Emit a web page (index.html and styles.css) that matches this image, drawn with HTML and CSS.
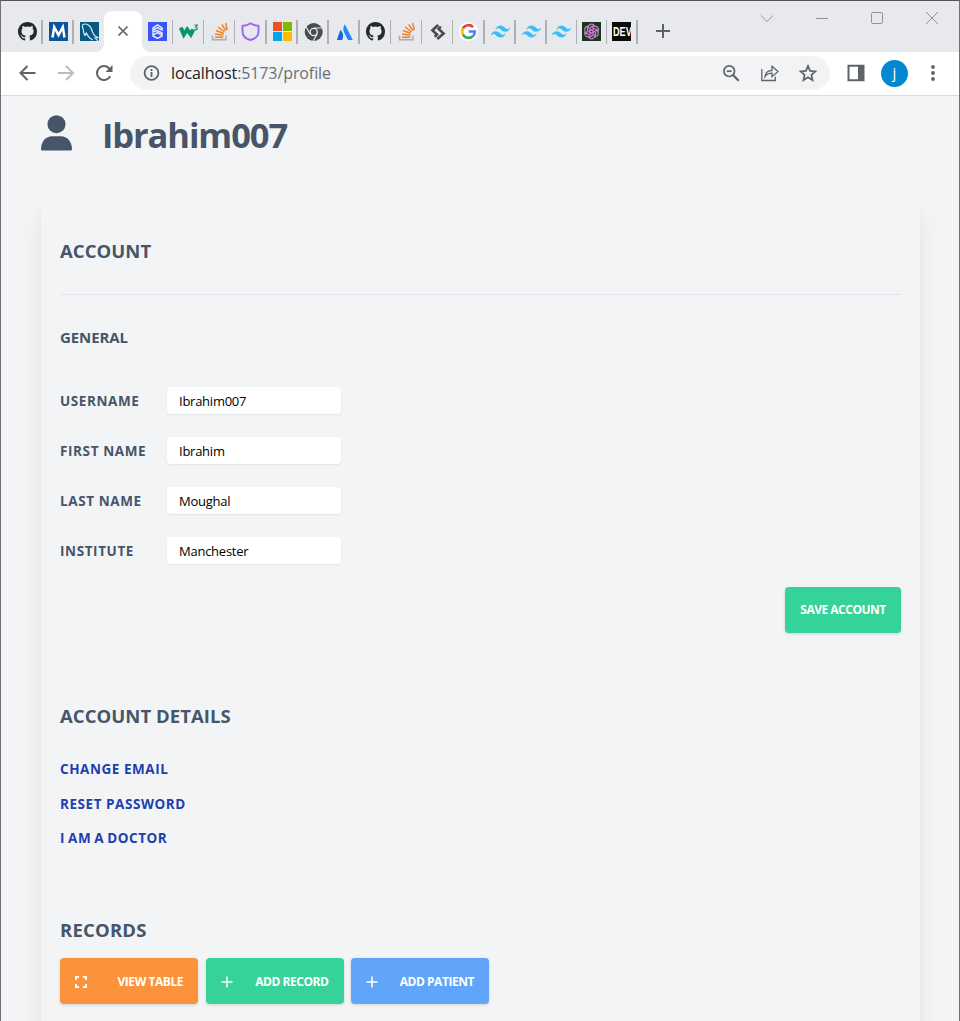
FILE: index.html
```html
<!DOCTYPE html>
<html lang="en">
<head>
<meta charset="utf-8">
<title>Profile</title>
<link rel="stylesheet" href="styles.css">
</head>
<body>
<svg width="0" height="0" class="defs" aria-hidden="true">
  <symbol id="github" viewBox="0 0 16 16"><path fill="#24292f" d="M8 0C3.58 0 0 3.58 0 8c0 3.54 2.29 6.53 5.47 7.59.4.07.55-.17.55-.38 0-.19-.01-.82-.01-1.49-2.01.37-2.53-.49-2.69-.94-.09-.23-.48-.94-.82-1.13-.28-.15-.68-.52-.01-.53.63-.01 1.08.58 1.23.82.72 1.21 1.87.87 2.33.66.07-.52.28-.87.51-1.07-1.78-.2-3.64-.89-3.64-3.95 0-.87.31-1.59.82-2.15-.08-.2-.36-1.02.08-2.12 0 0 .67-.21 2.2.82a7.6 7.6 0 0 1 4 0c1.53-1.04 2.2-.82 2.2-.82.44 1.1.16 1.92.08 2.12.51.56.82 1.27.82 2.15 0 3.07-1.87 3.75-3.65 3.95.29.25.54.73.54 1.48 0 1.07-.01 1.93-.01 2.2 0 .21.15.46.55.38A8.01 8.01 0 0 0 16 8c0-4.42-3.58-8-8-8z"/></symbol>
  <symbol id="stack" viewBox="0 0 19 19"><path fill="none" stroke="#a9acb0" stroke-width="1.5" d="M2.5 13.500v4.300h13.500v-4.300"/><path stroke="#f48024" stroke-width="1.500" fill="none" d="M5 15.300h8.300M5.100 12l8.300 1.200M6 8.500l7.800 3M8.200 5l6.400 5M11.700 2.500l4.200 6M15.700 1l1.500 7.200"/></symbol>
  <symbol id="tailwind" viewBox="0 0 24 24"><path fill="#38bdf8" stroke="#38bdf8" stroke-width=".5" d="M12 4.8c-3.2 0-5.2 1.6-6 4.8 1.2-1.6 2.6-2.2 4.2-1.8.9.23 1.57.89 2.3 1.63C13.7 10.63 15.1 12 18 12c3.2 0 5.2-1.6 6-4.8-1.2 1.6-2.6 2.2-4.2 1.8-.9-.23-1.57-.89-2.3-1.63C16.3 6.17 14.9 4.8 12 4.8zM6 12c-3.2 0-5.2 1.6-6 4.8 1.2-1.6 2.6-2.2 4.2-1.8.9.23 1.57.89 2.3 1.63C7.7 17.83 9.1 19.2 12 19.2c3.2 0 5.2-1.6 6-4.8-1.2 1.6-2.6 2.2-4.2 1.8-.9-.23-1.57-.89-2.3-1.63C10.3 13.37 8.9 12 6 12z"/></symbol>
</svg>
<div class="window">
  <header class="tabstrip">
    <div class="tab"><svg><use href="#github"/></svg></div>
    <div class="tab"><svg viewBox="0 0 19 19"><path fill="#0b559f" d="M0 0h19v19H0z"/><path fill="none" stroke="#fff" stroke-width="2.5" d="M3.5 15.5 5.2 5l4.3 8 4.3-8 1.7 10.500"/></svg></div>
    <div class="tab tab-last"><svg viewBox="0 0 19 19"><path fill="#065a82" d="M0 0h19v19H0z"/><path fill="none" stroke="#d5e5ec" stroke-width="1.2" d="M3 2.500c3-1.500 8 .5 9.500 7.500l2 3.500 3.500 2-3 .5 3 3M3 2.500c-1.500 1.500-.5 3 .2 4.500.3 2.500.3 5 1.800 6.500l1.200-2.500c1.500 3 3.500 5.500 6.500 7"/></svg></div>
    <div class="tab-active"><svg viewBox="0 0 12 12"><path d="M1.500 1.500l9 9m0-9l-9 9"/></svg></div>
    <div class="tab wide"><svg viewBox="0 0 19 19"><path fill="#3b55f6" d="M0 0h19v19H0z"/><path fill="none" stroke="#e4e9ff" stroke-width="1.500" d="M5 8V6l4.500-3L14 6v2L9.500 5.700 5 8v2l4.500-1.500L14 11v2.200l-4.500-2.500L5 13.200M5 11v3l4.500 2.500L14 14v-2"/></svg></div>
    <div class="tab wide"><svg viewBox="0 0 19 19"><path fill="none" stroke="#059862" stroke-width="4" d="M1.800 5.500 4.800 12.500l3.400-5 3.600 5 2.500-5"/><path fill="none" stroke="#059862" stroke-width="1.200" d="M15.500 3h2.900l-1.700 2c2 0 2 2.800 0 2.800l-1.300-.5"/></svg></div>
    <div class="tab wide"><svg><use href="#stack"/></svg></div>
    <div class="tab wide"><svg viewBox="0 0 19 19"><path fill="none" stroke="#9b66f7" stroke-width="1.900" stroke-linejoin="round" d="M9.500 1.200C7 3 4.500 3.700 1.500 3.800v5.700c0 4.500 3 7.300 8 8.500 5-1.200 8-4 8-8.500V3.800c-3-.1-5.500-.8-8-2.600z"/></svg></div>
    <div class="tab wide"><svg viewBox="0 0 19 19"><path fill="#f25022" d="M0 0h9v9H0z"/><path fill="#7fba00" d="M10 0h9v9h-9z"/><path fill="#00a4ef" d="M0 10h9v9H0z"/><path fill="#ffb900" d="M10 10h9v9h-9z"/></svg></div>
    <div class="tab wide"><svg viewBox="0 0 19 19"><circle cx="9.700" cy="10" r="9" fill="#484b50"/><circle cx="9.700" cy="10" r="3.600" fill="#484b50" stroke="#e8e9ed" stroke-width="1.400"/><path fill="none" stroke="#e8e9ed" stroke-width="1.200" d="M9.700 6h8.200M6.200 12 2.100 5M13.200 12l-4.100 7"/></svg></div>
    <div class="tab wide"><svg viewBox="0 0 19 19"><path fill="#2684ff" d="M9.800 2.200c-2 3.200-2 6 0 9.500l3.200 6.200h4.800z"/><path fill="#1868dc" d="M6.200 8.700c-.6-.6-1-.5-1.300.2L1.900 17.900h5.300c1.600-3.400 1.200-6.800-1-9.200z"/></svg></div>
    <div class="tab wide"><svg><use href="#github"/></svg></div>
    <div class="tab wide"><svg><use href="#stack"/></svg></div>
    <div class="tab wide"><svg viewBox="0 0 19 19"><path fill="none" stroke="#484848" stroke-width="2.600" d="M10.200 3 4.400 8.200l4.600 4.300-2.200 2.300M9.300 17l6.300-5.500-5-4.500 2.200-2.500"/></svg></div>
    <div class="tab wide"><svg viewBox="0 0 19 19"><circle cx="9.500" cy="9.500" r="9.500" fill="#fff"/><g fill="none" stroke-width="2.600"><path stroke="#ea4335" d="M3.900 6.400a6.400 6.400 0 0 1 10.200-1.300"/><path stroke="#fbbc05" d="M3.900 6.400a6.400 6.400 0 0 0 0 6.200"/><path stroke="#34a853" d="M3.900 12.600a6.400 6.400 0 0 0 9.800 1.700"/><path stroke="#4285f4" d="M13.700 14.300a6.300 6.300 0 0 0 2.200-4.800H9.700"/></g></svg></div>
    <div class="tab wide"><svg><use href="#tailwind"/></svg></div>
    <div class="tab wide"><svg><use href="#tailwind"/></svg></div>
    <div class="tab narrow"><svg><use href="#tailwind"/></svg></div>
    <div class="tab narrow"><svg viewBox="0 0 19 19"><path fill="#17381a" d="M0 0h19v19H0z"/><g fill="none" stroke="#c879d0" stroke-width="1.250"><path id="petal" d="M6.200 7.200V5.500a3.400 3.400 0 0 1 6-2.200L8 5.700v5.800"/><use href="#petal" transform="rotate(60 9.500 9.500)"/><use href="#petal" transform="rotate(120 9.500 9.500)"/><use href="#petal" transform="rotate(180 9.500 9.500)"/><use href="#petal" transform="rotate(240 9.500 9.500)"/><use href="#petal" transform="rotate(300 9.500 9.500)"/></g></svg></div>
    <div class="tab narrow"><div class="dev"><span>DEV</span></div></div>
    <div class="newtab"><svg viewBox="0 0 16 16"><path d="M8 1v14M1 8h14"/></svg></div>
    <div class="controls">
      <svg viewBox="0 0 14 14"><path d="M1 4.500l6 6 6-6"/></svg>
      <svg viewBox="0 0 14 14"><path d="M1 7.500h12"/></svg>
      <svg viewBox="0 0 14 14"><rect x="1.500" y="1.500" width="11" height="11" rx="1.500"/></svg>
      <svg viewBox="0 0 14 14"><path d="M1 1l12 12M13 1L1 13"/></svg>
    </div>
  </header>
  <nav class="toolbar">
    <div class="nav">
      <svg viewBox="0 0 18 18"><path d="M16.500 9H1.500M8.500 2l-7 7 7 7"/></svg>
      <svg class="off" viewBox="0 0 18 18"><path d="M1 9h15M9 2l7 7-7 7"/></svg>
      <svg viewBox="0 0 18 18"><path d="M15.200 12.200A7 7 0 1 1 14 4.200l1.500 1.600"/><path class="solid" d="M17.500 1v7h-7z"/></svg>
    </div>
    <div class="omnibox">
      <svg class="info" viewBox="0 0 16 16"><circle cx="8.500" cy="8" r="6.900"/><path d="M8.500 7v5M8.500 4v1.900"/></svg>
      <div class="url">localhost<span>:5173/profile</span></div>
      <div class="actions">
        <svg viewBox="0 0 18 18"><circle cx="7.200" cy="7.200" r="5.300"/><path d="M4.800 7.200h4.800"/><path class="thick" d="M11.200 11.200l5.500 5.500"/></svg>
        <svg class="thin" viewBox="0 0 18 18"><path d="M.8 5v11.500h13.500v-3.700M4 12.500c.5-4 3-6 7-6V2.200l6 5.300-6 5.200V9.200c-3 0-5.300 1-7 3.300z"/></svg>
        <svg viewBox="0 0 18 18"><path d="M8 2l2.100 4.900 5.300.5-4 3.500 1.200 5.200L8 13.300l-4.600 2.800 1.200-5.200-4-3.500 5.300-.5z"/></svg>
      </div>
    </div>
    <svg class="panel" viewBox="0 0 18 18"><path d="M.5.800h17v16.400H.5zM2.500 2.800v12.400h8.500V2.800z" fill-rule="evenodd"/></svg>
    <div class="avatar">j</div>
    <svg class="dots" viewBox="0 0 4 16"><circle cx="2" cy="2" r="1.900"/><circle cx="2" cy="8" r="1.900"/><circle cx="2" cy="14" r="1.900"/></svg>
  </nav>
  <main class="page">
    <div class="hero">
      <svg viewBox="0 0 31 36"><circle cx="15.500" cy="9.200" r="9"/><path d="M0 34.300C0 26.500 5 21.300 11 21.300h9c6 0 11 5.200 11 13 0 .7-.5 1.200-1.200 1.200H1.200C.5 35.500 0 35 0 34.300z"/></svg>
      <h1>Ibrahim007</h1>
    </div>
    <section class="card">
      <h2 class="t-account">ACCOUNT</h2>
      <hr>
      <h3>GENERAL</h3>
      <form class="fields">
        <label for="u">USERNAME</label><input id="u" value="Ibrahim007">
        <label for="f">FIRST NAME</label><input id="f" value="Ibrahim">
        <label for="l">LAST NAME</label><input id="l" value="Moughal">
        <label for="i">INSTITUTE</label><input id="i" value="Manchester">
      </form>
      <div class="save-row"><button class="btn green save" type="button">SAVE ACCOUNT</button></div>
      <h2 class="t-details">ACCOUNT DETAILS</h2>
      <ul class="links">
        <li><a>CHANGE EMAIL</a></li>
        <li><a>RESET PASSWORD</a></li>
        <li class="doctor"><a>I AM A DOCTOR</a></li>
      </ul>
      <h2 class="t-records">RECORDS</h2>
      <div class="records">
        <button class="btn orange" type="button"><svg class="expand" viewBox="0 0 12 12"><path d="M1 4V1h3M8 1h3v3M11 8v3H8M4 11H1V8"/></svg><span>VIEW TABLE</span></button>
        <button class="btn green" type="button"><svg viewBox="0 0 12 12"><path d="M6 .5v11M.5 6h11"/></svg><span>ADD RECORD</span></button>
        <button class="btn blue" type="button"><svg viewBox="0 0 12 12"><path d="M6 .5v11M.5 6h11"/></svg><span>ADD PATIENT</span></button>
      </div>
    </section>
  </main>
</div>
</body>
</html>
```
FILE: styles.css
```css
* { box-sizing: border-box; }
body { margin: 0; overflow: hidden; font-family: "Open Sans", "Noto Sans", sans-serif; }
.defs { position: absolute; }
.window { width: 960px; height: 1021px; overflow: hidden; border: 1px solid #707174; border-top-color: #525254; border-bottom: 0; background: #f3f4f6; }
svg { display: block; flex: none; }

.tabstrip { display: flex; height: 51px; padding-left: 11px; background: #e8e9ed; }
.tab { position: relative; width: 31px; flex: none; padding: 21px 0 0 6px; }
.tab.wide { width: 31.150px; }
.tab.narrow { width: 30.300px; padding-left: 5px; }
.tab svg { width: 19px; height: 19px; }
.tab::after { content: ""; position: absolute; right: 0; top: 19px; width: 1.600px; height: 24px; background: #afb0b5; }
.tab-last { width: 30px; }
.tab-last::after { display: none; }
.tab-active { position: relative; width: 38px; height: 41px; margin-top: 10px; padding: 14px 0 0 13px; border-radius: 8px 8px 0 0; background: #fff; }
.tab-active::before, .tab-active::after { content: ""; position: absolute; bottom: 0; width: 8px; height: 8px; }
.tab-active::before { left: -8px; background: radial-gradient(circle at 0 0, transparent 7.500px, #fff 8px); }
.tab-active::after { right: -8px; background: radial-gradient(circle at 100% 0, transparent 7.500px, #fff 8px); }
.tab-active svg { width: 12px; height: 12px; fill: none; stroke: #5f6368; stroke-width: 1.700; }
.dev { display: flex; align-items: center; justify-content: center; width: 19px; height: 19px; overflow: hidden; background: #0b0b0c; color: #fff; font: 700 13px/19px "Liberation Sans", sans-serif; }
.dev span { transform: scaleX(.7); }
.newtab { padding: 22px 0 0 17px; }
.newtab svg { width: 16px; height: 16px; fill: none; stroke: #5f6368; stroke-width: 2; }
.controls { display: flex; gap: 41px; margin-left: auto; padding: 10px 20px 0 0; }
.controls svg { width: 14px; height: 14px; fill: none; stroke: #929397; stroke-width: 1; }

.toolbar { display: flex; align-items: center; height: 44px; padding: 0 24px 1px 18px; border-bottom: 1px solid #dadbde; background: #fff; }
.nav { display: flex; gap: 20px; }
.nav svg { width: 18px; height: 18px; fill: none; stroke: #5f6368; stroke-width: 2; }
.nav .off { stroke: #bbbdc0; }
.nav .solid { fill: #5f6368; stroke: none; }
.omnibox { display: flex; align-items: center; width: 700px; height: 34px; margin-left: 17px; padding: 0 12px 0 13px; border-radius: 17px; background: #f1f3f4; }
.info { width: 16px; height: 16px; overflow: visible; fill: none; stroke: #5f6368; stroke-width: 1.800; }
.url { margin-left: 12px; color: #202124; font-size: 16px; line-height: 24px; letter-spacing: -.1px; white-space: nowrap; }
.url span { color: #6b6f74; }
.actions { display: flex; gap: 21px; margin-left: auto; }
.actions svg { width: 18px; height: 18px; overflow: visible; fill: none; stroke: #5f6368; stroke-width: 1.700; }
.actions .thin { stroke-width: 1.300; }
.actions .thick { stroke-width: 2.200; }
.panel { width: 18px; height: 18px; margin-left: 17px; fill: #5f6368; }
.avatar { width: 27px; height: 27px; margin-left: 16px; border-radius: 50%; background: #0288d1; color: #fff; font-size: 15px; line-height: 25px; text-align: center; }
.dots { width: 4px; height: 16px; margin-left: 23px; fill: #5f6368; }

.page { padding: 19px 39px 0 40px; color: #475569; }
.hero { display: flex; gap: 30px; height: 76px; }
.hero svg { width: 31px; height: 36px; fill: #475569; }
h1, h2, h3 { margin: 0; font-weight: 700; white-space: nowrap; }
h1 { font-size: 34.500px; line-height: 40px; letter-spacing: -1.100px; }
.card { height: 900px; padding: 47px 19px 0; background: #f3f4f6; box-shadow: 0 20px 25px -5px rgba(0,0,0,.1), 0 8px 10px -6px rgba(0,0,0,.1); }
h2 { font-size: 18.500px; line-height: 26px; letter-spacing: .05px; }
hr { height: 1px; margin: 30px 0 31px; border: 0; background: #e3e5e8; }
h3 { font-size: 15px; line-height: 22px; letter-spacing: -.1px; }
.fields { display: grid; grid-template-columns: 107px 174px; row-gap: 23px; margin-top: 39px; align-items: center; }
label { padding-top: 1px; font-size: 13.500px; line-height: 26px; font-weight: 700; letter-spacing: .6px; white-space: nowrap; }
input { width: 174px; height: 27px; padding: 1px 12px 0; border: 0; border-radius: 4px; background: #fff; color: #000; font: 13px "Open Sans", sans-serif; letter-spacing: -.25px; box-shadow: 0 1px 2px rgba(0,0,0,.07); }
.save-row { display: flex; justify-content: flex-end; margin-top: 23px; }
.btn { display: flex; align-items: center; width: 138px; height: 46px; padding: 0 15px 1px; border: 0; border-radius: 4px; color: #fff; font: 700 12px "Open Sans", sans-serif; letter-spacing: -.45px; white-space: nowrap; box-shadow: 0 1px 3px rgba(0,0,0,.15); }
.btn svg { width: 12px; height: 12px; margin-top: 2px; fill: none; stroke: #fff; stroke-width: 1.500; }
.btn .expand { stroke-width: 1.900; }
.btn span { margin-left: auto; padding-top: 2px; }
.save { width: 116px; justify-content: center; letter-spacing: -.5px; }
.green { background: #35d399; }
.orange { background: #fb923c; }
.blue { background: #60a5fa; }
.t-details { margin-top: 70px; }
.links { display: grid; gap: 14.500px; margin: 30px 0 0; padding: 0; list-style: none; color: #1e40af; font-size: 13.500px; line-height: 20px; font-weight: 700; letter-spacing: .55px; }
.links a { white-space: nowrap; }
.doctor { word-spacing: -1px; }
.t-records { margin-top: 69px; letter-spacing: .2px; }
.records { display: flex; gap: 7.500px; margin-top: 15px; }
```
